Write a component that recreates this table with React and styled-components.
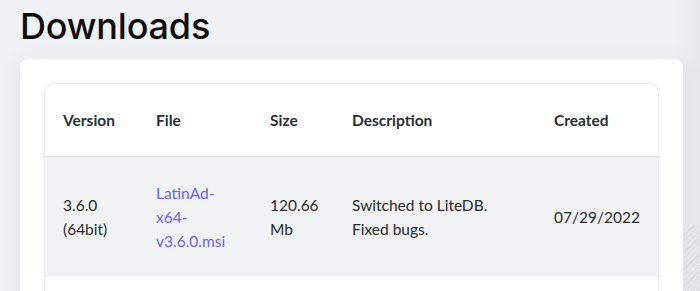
import React from "react";
import styled, { createGlobalStyle } from "styled-components";

const GlobalStyle = createGlobalStyle`
  html, body {
    margin: 0;
    padding: 0;
  }
  body {
    font-family: Lato, "Noto Sans", sans-serif;
    background: #f0f1f4;
    color: #2a2a2a;
  }
`;

const Page = styled.div`
  height: 291px;
  overflow: hidden;
  padding: 4px 16px 0 20px;
  box-sizing: border-box;
  background:
    repeating-linear-gradient(
      135deg,
      transparent 0,
      transparent 3px,
      rgba(200, 202, 208, 0.35) 3px,
      rgba(200, 202, 208, 0.35) 4px
    ) right bottom / 16px 66px no-repeat,
    linear-gradient(90deg, #f0f1f4 96%, #e6e7ea 100%);
`;

const Title = styled.h1`
  margin: 0 0 11px;
  font-family: Inter, "Noto Sans", sans-serif;
  font-size: 36px;
  line-height: 44px;
  font-weight: 500;
  color: #0d0d0d;
  letter-spacing: -0.2px;
`;

const Card = styled.div`
  width: 663px;
  box-sizing: border-box;
  background: #fff;
  border-radius: 8px;
  padding: 24px 24px 0;
  box-shadow: 0 4px 24px rgba(40, 44, 80, 0.08);
`;

const TableWrap = styled.div`
  border: 1px solid #ececf4;
  border-bottom: none;
  border-radius: 10px 10px 0 0;
  overflow: hidden;
`;

const Table = styled.table`
  width: 100%;
  border-collapse: collapse;
  table-layout: fixed;
`;

const Th = styled.th`
  text-align: left;
  font-size: 15.5px;
  font-weight: 700;
  color: #263238;
  padding: 24px 18px;
  line-height: 24px;
  border-bottom: 1px solid #dcdfe4;
`;

const Row = styled.tr`
  background: ${({ $shaded }) => ($shaded ? "#f1f2f4" : "#fff")};
`;

const Td = styled.td`
  font-size: 15.5px;
  line-height: 24px;
  color: #2a2a2a;
  padding: 24px 18px;
  vertical-align: middle;
`;

const FileLink = styled.a`
  color: #6b5ff5;
  text-decoration: none;
`;

const columns = [
  { label: "Version", width: 93 },
  { label: "File", width: 114 },
  { label: "Size", width: 82 },
  { label: "Description", width: 202 },
  { label: "Created", width: 124 },
];

const downloads = [
  {
    version: "3.6.0 (64bit)",
    file: "LatinAd-x64-v3.6.0.msi",
    size: "120.66 Mb",
    description: "Switched to LiteDB. Fixed bugs.",
    created: "07/29/2022",
  },
];

const App = () => (
  <>
    <GlobalStyle />
    <Page>
      <Title>Downloads</Title>
      <Card>
        <TableWrap>
          <Table>
            <colgroup>
              {columns.map((c) => (
                <col key={c.label} style={{ width: c.width }} />
              ))}
            </colgroup>
            <thead>
              <tr>
                {columns.map((c) => (
                  <Th key={c.label}>{c.label}</Th>
                ))}
              </tr>
            </thead>
            <tbody>
              {downloads.map((d) => (
                <Row key={d.file} $shaded>
                  <Td>{d.version}</Td>
                  <Td>
                    <FileLink href="#">{d.file}</FileLink>
                  </Td>
                  <Td>{d.size}</Td>
                  <Td>{d.description}</Td>
                  <Td>{d.created}</Td>
                </Row>
              ))}
              <Row>
                <Td colSpan={5} />
              </Row>
            </tbody>
          </Table>
        </TableWrap>
      </Card>
    </Page>
  </>
);

export default App;
